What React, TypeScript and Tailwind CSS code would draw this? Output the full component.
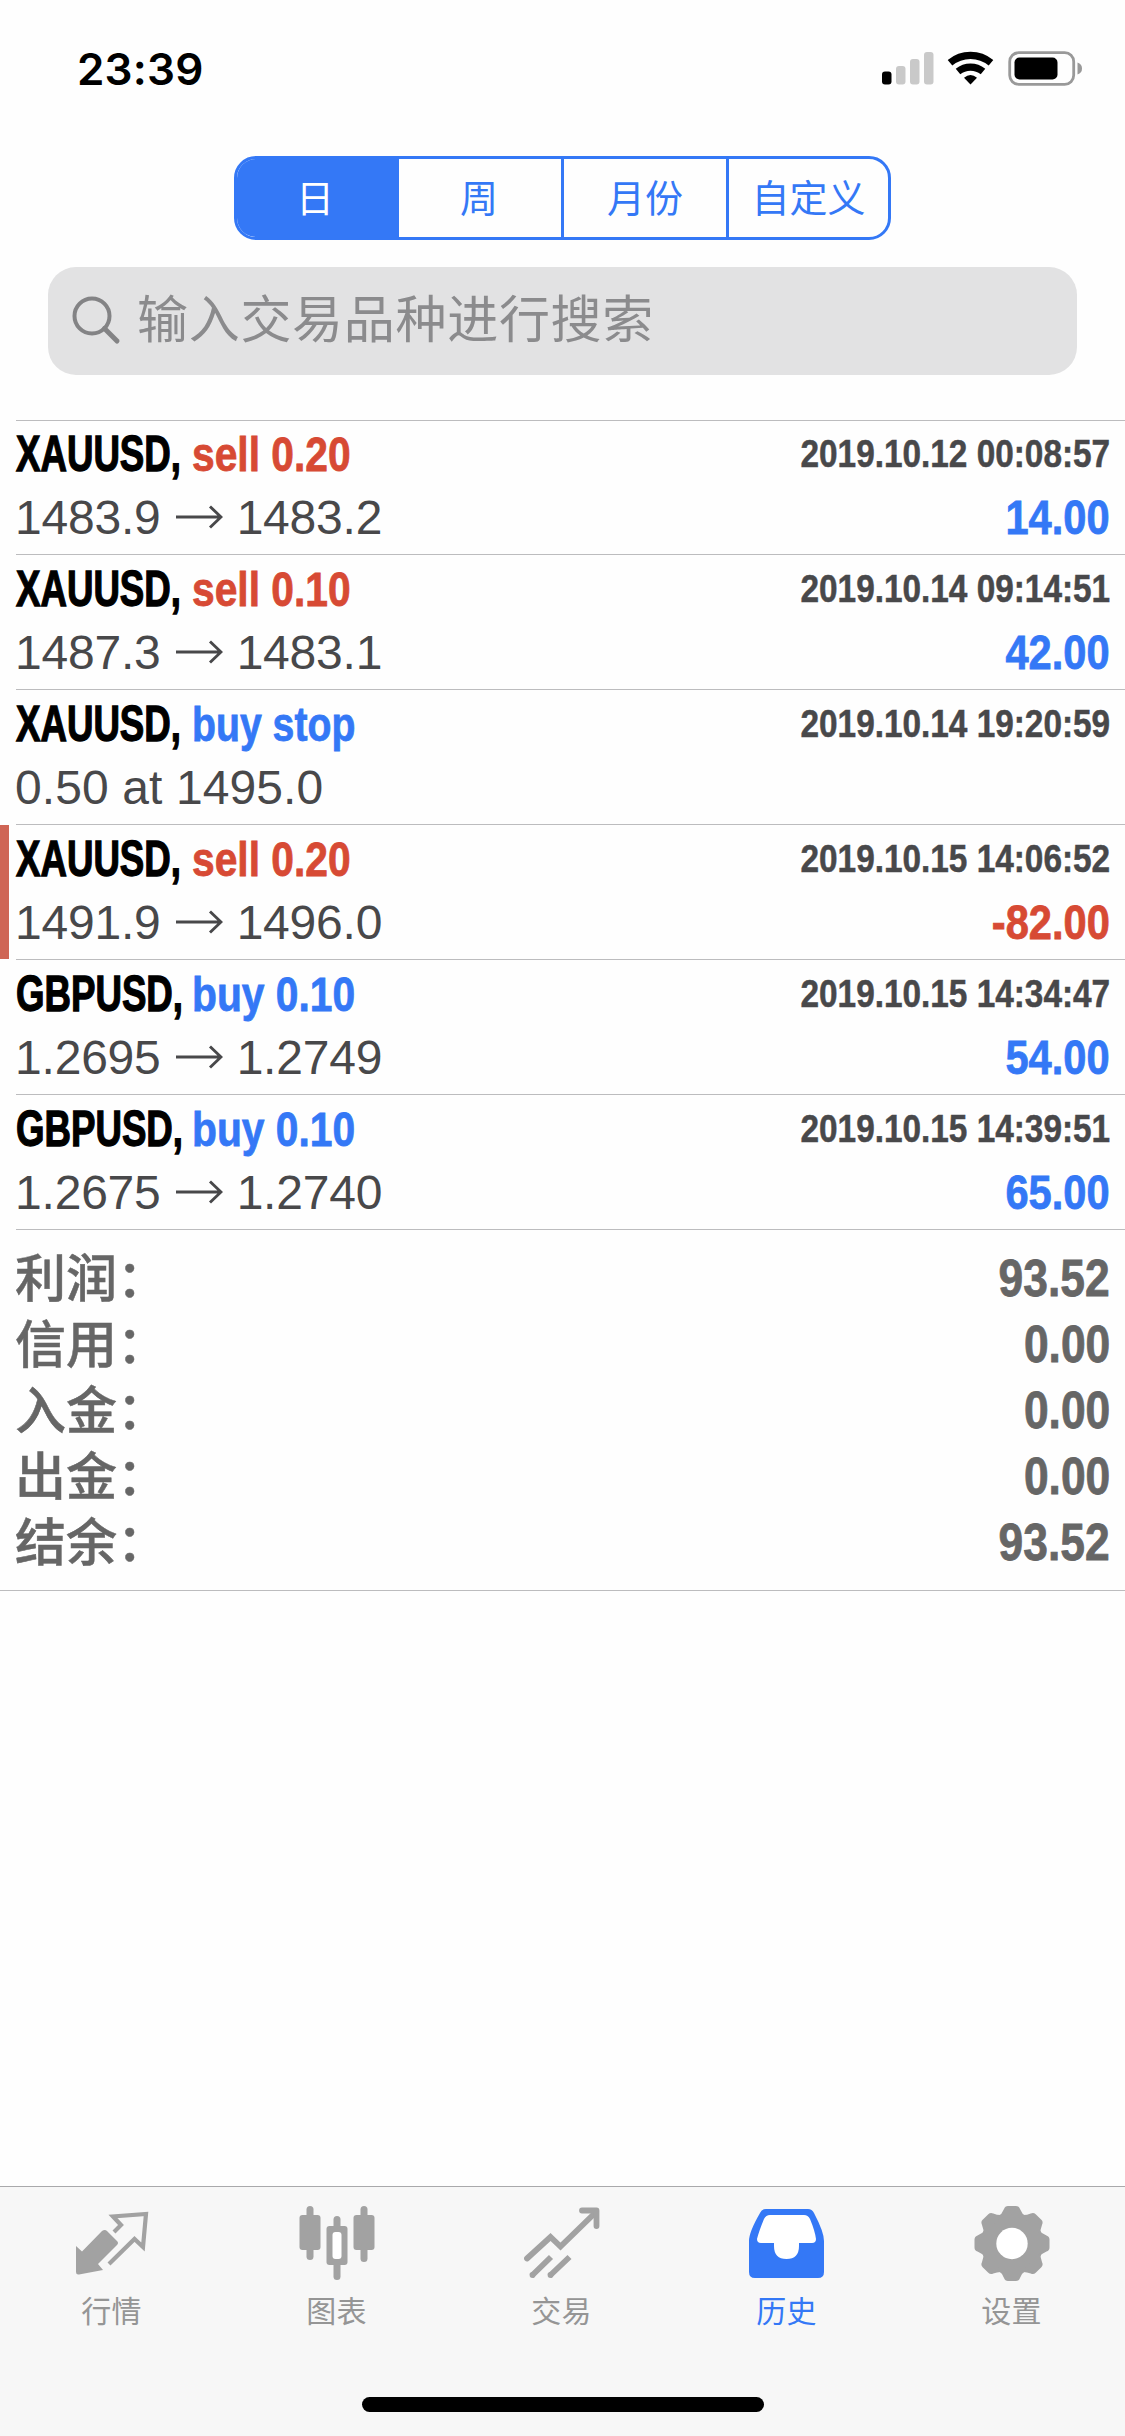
import type { ReactNode } from "react";

const BLUE = "text-[#3478f6]";
const RED = "text-[#d74a34]";

type Deal = {
  symbol: string;
  action: string;
  actionColor: string;
  from?: string;
  to?: string;
  note?: string;
  time: string;
  profit?: string;
  profitColor?: string;
  marked?: boolean;
};

const deals: Deal[] = [
  { symbol: "XAUUSD,", action: "sell 0.20", actionColor: RED, from: "1483.9", to: "1483.2", time: "2019.10.12 00:08:57", profit: "14.00", profitColor: BLUE },
  { symbol: "XAUUSD,", action: "sell 0.10", actionColor: RED, from: "1487.3", to: "1483.1", time: "2019.10.14 09:14:51", profit: "42.00", profitColor: BLUE },
  { symbol: "XAUUSD,", action: "buy stop", actionColor: BLUE, note: "0.50 at 1495.0", time: "2019.10.14 19:20:59" },
  { symbol: "XAUUSD,", action: "sell 0.20", actionColor: RED, from: "1491.9", to: "1496.0", time: "2019.10.15 14:06:52", profit: "-82.00", profitColor: RED, marked: true },
  { symbol: "GBPUSD,", action: "buy 0.10", actionColor: BLUE, from: "1.2695", to: "1.2749", time: "2019.10.15 14:34:47", profit: "54.00", profitColor: BLUE },
  { symbol: "GBPUSD,", action: "buy 0.10", actionColor: BLUE, from: "1.2675", to: "1.2740", time: "2019.10.15 14:39:51", profit: "65.00", profitColor: BLUE },
];

const totals = [
  ["利润：", "93.52"],
  ["信用：", "0.00"],
  ["入金：", "0.00"],
  ["出金：", "0.00"],
  ["结余：", "93.52"],
];

function StatusBar() {
  return (
    <div className="flex h-[138px] items-center justify-between pl-[77px] pr-[42px]">
      <span className="font-['Inter'] text-[44px] font-semibold leading-none tracking-[0.2px]">23:39</span>
      <svg width="202" height="36" viewBox="0 0 202 36">
        <rect x="1" y="20.500" width="9.500" height="13" rx="3" fill="#000" />
        <rect x="15" y="15" width="9.500" height="18.500" rx="3" fill="#c9c9c9" />
        <rect x="29" y="8" width="9.500" height="25.500" rx="3" fill="#c9c9c9" />
        <rect x="43" y="1" width="9.500" height="32.500" rx="3" fill="#c9c9c9" />
        <g fill="none" stroke="#000" strokeWidth="7.200">
          <path d="M69 11.800a32 32 0 0 1 41 0" />
          <path d="M77 20.500a20 20 0 0 1 25 0" />
        </g>
        <path d="M83 26.800q6.500-5.600 13 0L89.500 33.500z" fill="#000" />
        <rect x="128.700" y="1.700" width="64" height="31.600" rx="9" fill="none" stroke="#999" strokeWidth="2.800" />
        <rect x="133.500" y="6.500" width="43" height="22" rx="5" fill="#000" />
        <path d="M196.500 11.500q4.500 1.500 4.500 6t-4.500 6z" fill="#999" />
      </svg>
    </div>
  );
}

function Segments() {
  return (
    <div className="mx-auto mt-[18px] grid h-[84px] w-[657px] grid-cols-[162px_162px_165px_1fr] overflow-hidden rounded-[22px] border-[3px] border-[#3478f6] text-[38px] text-[#3478f6]">
      <div className="flex items-center justify-center bg-[#3478f6] pr-[6px] pt-[2px] text-white">日</div>
      <div className="flex items-center justify-center pr-[2px] pt-[2px]">周</div>
      <div className="flex items-center justify-center border-l-[3px] border-[#3478f6] pt-[2px]">月份</div>
      <div className="flex items-center justify-center border-l-[3px] border-[#3478f6] pt-[2px]">自定义</div>
    </div>
  );
}

function SearchBox() {
  return (
    <div className="mx-12 mt-[27px] flex h-[108px] items-center rounded-[28px] bg-[#e2e2e3] pl-[24px] text-[51px] tracking-[0.7px] text-[#8b8b8d]">
      <svg width="50" height="50" viewBox="0 0 50 50" fill="none" stroke="#838385" strokeWidth="4">
        <circle cx="20" cy="20" r="17.500" />
        <path d="M32.500 32.500L45 45" strokeWidth="5" strokeLinecap="round" />
      </svg>
      <span className="-mt-px ml-[15px] leading-none">输入交易品种进行搜索</span>
    </div>
  );
}

function Arrow() {
  return (
    <svg className="-mt-[2px] ml-[15px] mr-[14px]" width="47" height="24" viewBox="0 0 47 24" fill="none" stroke="#48484a" strokeWidth="2.900">
      <path d="M0 12H45M34 1.500L45 12L34 22.500" />
    </svg>
  );
}

function DealRow({ deal, first }: { deal: Deal; first: boolean }) {
  return (
    <div className={first ? "flex h-[134px]" : "flex h-[135px]"}>
      <div className={deal.marked ? "mb-px w-[9px] bg-[#cf6555]" : "w-[9px]"} />
      <div className="ml-[7px] flex flex-1 flex-col justify-end border-b border-[#bcbcbe] pr-[15px] pb-[3px]">
        <div className="flex h-[61px] items-center whitespace-nowrap font-bold">
          <div className="w-[176px] text-[50px] text-black">
            <span className="inline-block origin-left scale-x-[0.733] [-webkit-text-stroke:1.3px]">{deal.symbol}</span>
          </div>
          <div className={`flex-1 text-[49px] ${deal.actionColor}`}>
            <span
              className={
                deal.action === "buy stop"
                  ? "inline-block origin-left scale-x-[0.8] [-webkit-text-stroke:0.8px]"
                  : "inline-block origin-left scale-x-[0.832] [-webkit-text-stroke:0.8px]"
              }
            >
              {deal.action}
            </span>
          </div>
          <span className="inline-block origin-right scale-x-[0.855] text-[39px] text-[#48484a] [-webkit-text-stroke:0.5px]">{deal.time}</span>
        </div>
        <div className="flex h-[66px] items-center justify-between whitespace-nowrap text-[49px] text-[#48484a]">
          {deal.note ? (
            <span className="-ml-px text-[48px] tracking-[0.1px]">{deal.note}</span>
          ) : (
            <div className="-ml-px flex items-center text-[48px] tracking-[-0.2px]">
              <span>{deal.from}</span>
              <Arrow />
              <span>{deal.to}</span>
            </div>
          )}
          <span className={`inline-block origin-right scale-x-[0.85] font-bold [-webkit-text-stroke:0.8px] ${deal.profitColor ?? ""}`}>{deal.profit}</span>
        </div>
      </div>
    </div>
  );
}

function Totals() {
  return (
    <div className="h-[361px] border-b border-[#bcbcbe] pl-[15px] pr-[15px] pt-[15px] text-[51px] text-[#666]">
      {totals.map(([label, value]) => (
        <div key={label} className="flex h-[66px] items-center justify-between">
          <span className="pt-[2px] text-[51px] font-medium leading-none [-webkit-text-stroke:0.5px]">{label}</span>
          <span className="inline-block origin-right scale-x-[0.87] font-bold leading-none [-webkit-text-stroke:0.8px]">{value}</span>
        </div>
      ))}
    </div>
  );
}

function Tab({ label, active, children }: { label: string; active?: boolean; children: ReactNode }) {
  return (
    <div className={active ? "flex flex-1 flex-col items-center text-[#3478f6]" : "flex flex-1 flex-col items-center text-[#959595]"}>
      <svg className="mt-[18px]" width="78" height="78" viewBox="0 0 78 78" fill="none">
        {children}
      </svg>
      <span className="mt-[10px] text-[30px] leading-[38px] tracking-[0.3px]">{label}</span>
    </div>
  );
}

function TabBar() {
  return (
    <div className="mt-auto flex h-[250px] flex-col border-t border-[#a9a9ab] bg-[#f7f7f7]">
      <div className="-ml-px mr-px flex">
        <Tab label="行情">
          <path d="M3 41L9 46.500L29 26q3-2 5 0L44 36q2 2 0 4L25 59L30 65L6 69.500Q3 70 3 67z" fill="#a2a2a2" />
          <path d="M41 27L48 20L40 11.500L73 9L70 42L61.500 34L36 59" stroke="#a2a2a2" strokeWidth="4.200" />
        </Tab>
        <Tab label="图表">
          <g fill="#a2a2a2">
            <rect x="8.500" y="1" width="7" height="54" rx="3.500" />
            <rect x="1.500" y="10" width="21" height="35" rx="3" />
            <rect x="62.500" y="1" width="7" height="56" rx="3.500" />
            <rect x="55.500" y="10" width="21" height="35" rx="3" />
            <rect x="35.500" y="11" width="7" height="64" rx="3.500" />
            <rect x="28.500" y="21" width="21" height="39" rx="3" />
          </g>
          <rect x="34.500" y="27" width="9" height="27" rx="3" fill="#fff" />
        </Tab>
        <Tab label="交易">
          <g stroke="#a2a2a2" strokeWidth="5.800">
            <path d="M4 53.500L27.500 32L37.500 41.500L73 7" strokeLinecap="round" />
            <path d="M59 5.500H73.500V21" strokeLinejoin="round" strokeLinecap="round" />
            <path d="M8.500 71L28 52M26.500 71L46.500 52" />
          </g>
          <circle cx="9.500" cy="70" r="2.900" fill="#a2a2a2" />
          <circle cx="27.500" cy="70" r="2.900" fill="#a2a2a2" />
        </Tab>
        <Tab label="历史" active>
          <path d="M18 4H60q4 0 6 4Q76 27 76 36V67q0 6-6 6H7q-6 0-6-6V36Q1 27 12 8q2-4 6-4z" fill="#3478f6" />
          <path d="M22 10H56q4 0 6 4Q67 26 68 34q0 4-4 4H51V41q0 13-12.500 13T26 41V38H13q-4 0-4-4Q11 26 16 14q2-4 6-4z" fill="#fff" />
        </Tab>
        <Tab label="设置">
          <circle cx="39" cy="38.500" r="31" fill="#a2a2a2" />
          <g fill="#a2a2a2">
            {[0, 45, 90, 135, 180, 225, 270, 315].map((angle) => (
              <path key={angle} transform={`rotate(${angle} 39 38.500)`} d="M25 12Q29 9 31 4Q32 1 35 1H43Q46 1 47 4Q49 9 53 12z" />
            ))}
          </g>
          <circle cx="39" cy="38.500" r="15.700" fill="#fff" />
        </Tab>
      </div>
      <div className="mx-auto mt-auto mb-[24px] h-[15px] w-[402px] rounded-full bg-black" />
    </div>
  );
}

export default function App() {
  return (
    <div className="flex h-[2436px] w-[1125px] flex-col bg-[#fefefe] font-['Liberation_Sans','Noto_Sans_CJK_SC',sans-serif] text-black">
      <StatusBar />
      <Segments />
      <SearchBox />
      <div className="mt-[45px]">
        <div className="ml-4 h-px bg-[#bcbcbe]" />
        {deals.map((deal, i) => (
          <DealRow key={i} deal={deal} first={i === 0} />
        ))}
        <Totals />
      </div>
      <TabBar />
    </div>
  );
}
